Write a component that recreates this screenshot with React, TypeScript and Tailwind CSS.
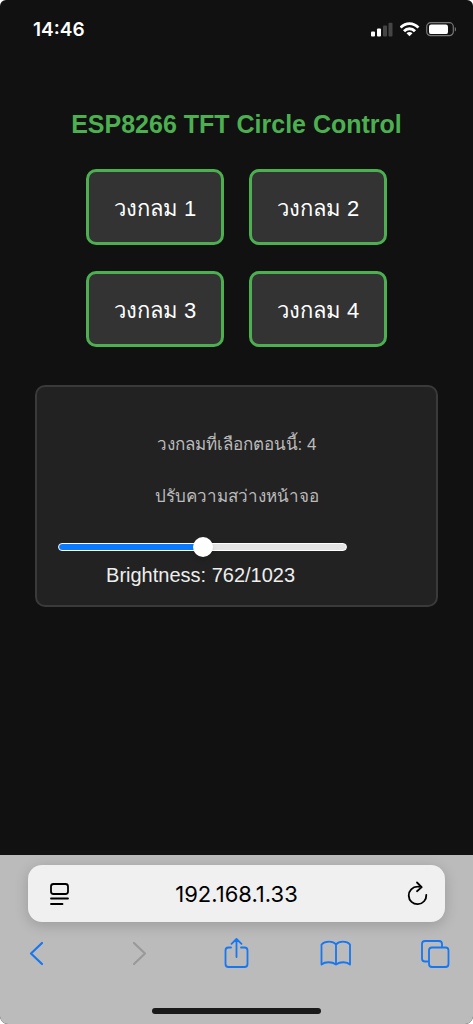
import { useState } from "react";

const MIN_BRIGHTNESS = 501;
const MAX_BRIGHTNESS = 1023;

function StatusBar() {
  return (
    <header className="flex h-14 items-center justify-between pt-1 pr-[15px] pl-[33px] text-white">
      <time className="font-['Inter',sans-serif] text-[19px] leading-6 font-semibold">14:46</time>
      <div className="flex items-center gap-1.5">
        <svg width="23" height="16" viewBox="0 0 23 16" role="img" aria-label="Signal">
          <rect x="0" y="9.500" width="4" height="5" rx="1" fill="#fff" />
          <rect x="6" y="6.500" width="4" height="8" rx="1" fill="#fff" />
          <rect x="12" y="3.500" width="4" height="11" rx="1" fill="#454545" />
          <rect x="17.500" y="0.800" width="4" height="13.700" rx="1" fill="#454545" />
        </svg>
        <svg width="20" height="16" viewBox="0 0 20 16" role="img" aria-label="Wi-Fi">
          <g fill="none" stroke="#fff" strokeWidth="2.8">
            <path d="M0.6 5.6C5.600 0.200 13.400 0.200 18.400 5.600" />
            <path d="M4 9.200C7 5.900 12 5.900 15 9.200" />
          </g>
          <path d="M6.500 11.200c1.700-1.500 4.300-1.500 6 0L9.500 14.300z" fill="#fff" />
        </svg>
        <svg width="32" height="16" viewBox="-1 0 32 16" role="img" aria-label="Battery">
          <rect x="-0.300" y="0.700" width="26.600" height="13" rx="4" fill="none" stroke="#777" strokeWidth="1.2" />
          <rect x="2" y="2.600" width="19" height="9.500" rx="2.200" fill="#fff" />
          <path d="M27.800 5c1.600.6 1.600 4 0 4.600z" fill="#777" />
        </svg>
      </div>
    </header>
  );
}

function ToolbarIcon({ label, children }: { label: string; children: React.ReactNode }) {
  return (
    <svg width="32" height="32" viewBox="0 0 32 32" fill="none" stroke="currentColor" strokeWidth="1.8" strokeLinecap="round" strokeLinejoin="round" role="img" aria-label={label}>
      {children}
    </svg>
  );
}

function BrowserBar() {
  return (
    <footer className="mt-auto bg-[#bbbbbb] pt-2.5 pb-2.5 text-[#1677f0]">
      <div className="mx-7 flex h-[57px] items-center rounded-[14px] bg-[#f0f0f0] px-4 text-black shadow-[0_3px_14px_rgba(0,0,0,0.18)]">
        <button type="button" aria-label="Page menu">
          <ToolbarIcon label="Page menu">
            <rect x="7" y="6" width="17" height="10" rx="2.5" />
            <path d="M7 20.5h17M7 26h11.5" />
          </ToolbarIcon>
        </button>
        <input
          aria-label="Address"
          defaultValue="192.168.1.33"
          className="min-w-0 flex-1 bg-transparent text-center font-['Inter',sans-serif] text-[22px] leading-7 outline-none"
        />
        <button type="button" aria-label="Reload">
          <ToolbarIcon label="Reload">
            <path d="M29.300 16.800A8.800 8.800 0 1 1 20.500 8.600Q22.500 8.500 24.600 9.200M20 4.500L24.700 9.100L20 13.200" />
          </ToolbarIcon>
        </button>
      </div>
      <nav className="mt-4 flex items-center justify-between pr-[22px] pl-5">
        <button type="button" aria-label="Back">
          <ToolbarIcon label="Back"><path d="M22 5L11 15.5L22 26" strokeWidth="2.2" /></ToolbarIcon>
        </button>
        <button type="button" aria-label="Forward" className="text-[#999999]">
          <ToolbarIcon label="Forward"><path d="M14 5L25 15.5L14 26" strokeWidth="2.2" /></ToolbarIcon>
        </button>
        <button type="button" aria-label="Share">
          <ToolbarIcon label="Share">
            <path d="M11 9.5H8.500a3 3 0 0 0-3 3V26a3 3 0 0 0 3 3h16a3 3 0 0 0 3-3V12.500a3 3 0 0 0-3-3H21M16.500 19V1M11.500 5.800L16.500 1L21.500 5.800" />
          </ToolbarIcon>
        </button>
        <button type="button" aria-label="Bookmarks">
          <ToolbarIcon label="Bookmarks">
            <path d="M17 6.500v20M17 6.500C14 2.600 6 2.600 2.500 6.500v20C6 23.500 13 23.500 17 26.500C21 23.500 28 23.500 31 26.500V6.500C28 2.600 20 2.600 17 6.500" />
          </ToolbarIcon>
        </button>
        <button type="button" aria-label="Tabs">
          <ToolbarIcon label="Tabs">
            <path d="M8.500 23.500H6a3 3 0 0 1-3-3V6a3 3 0 0 1 3-3h14a3 3 0 0 1 3 3v2.500" />
            <rect x="10" y="9.500" width="19.500" height="19.500" rx="3" />
          </ToolbarIcon>
        </button>
      </nav>
      <div className="mx-auto mt-[38px] h-1.5 w-[169px] rounded-full bg-[#1a1a1a]" />
    </footer>
  );
}

export default function App() {
  const [selected, setSelected] = useState(4);
  const [brightness, setBrightness] = useState(762);
  const filled = ((brightness - MIN_BRIGHTNESS) / (MAX_BRIGHTNESS - MIN_BRIGHTNESS)) * 100;

  return (
    <div className="flex min-h-screen flex-col overflow-hidden rounded-t-md rounded-b-lg bg-[#111111] font-['Liberation_Sans','Noto_Sans',sans-serif]">
      <StatusBar />
      <main className="px-[35px] pt-[52px] pb-8 text-center">
        <h1 className="text-[25px] leading-8 font-bold text-[#4caf50]">ESP8266 TFT Circle Control</h1>
        <div className="mx-auto mt-[29px] grid w-fit grid-cols-2 gap-x-[25px] gap-y-[26px]">
          {[1, 2, 3, 4].map((n) => (
            <button
              key={n}
              type="button"
              onClick={() => setSelected(n)}
              className="h-[76px] w-[138px] rounded-[10px] border-[3px] border-[#4caf50] bg-[#333333] pt-1 text-[22px] leading-8 text-white"
            >
              วงกลม {n}
            </button>
          ))}
        </div>
        <section className="mt-[38px] rounded-[10px] border-2 border-[#3a3a3a] bg-[#222222] px-[21px] pt-11 pb-4">
          <p className="text-[17px] leading-7 text-[#bbbbbb]">วงกลมที่เลือกตอนนี้: {selected}</p>
          <label htmlFor="brightness" className="mt-6 block text-[17px] leading-7 text-[#bbbbbb]">
            ปรับความสว่างหน้าจอ
          </label>
          <div className="mt-8 w-[81%]">
            <input
              id="brightness"
              type="range"
              min={MIN_BRIGHTNESS}
              max={MAX_BRIGHTNESS}
              value={brightness}
              onChange={(e) => setBrightness(Number(e.target.value))}
              style={{ backgroundImage: `linear-gradient(to right, #0a7aff ${filled}%, #e4e4e4 ${filled}%)` }}
              className="block h-2 w-full appearance-none rounded-full border border-white [&::-webkit-slider-thumb]:size-5 [&::-webkit-slider-thumb]:appearance-none [&::-webkit-slider-thumb]:rounded-full [&::-webkit-slider-thumb]:bg-white [&::-webkit-slider-thumb]:shadow-md"
            />
            <output htmlFor="brightness" className="mt-2.5 block pr-1 text-[20px] leading-7 text-[#eeeeee]">
              Brightness: {brightness}/1023
            </output>
          </div>
        </section>
      </main>
      <BrowserBar />
    </div>
  );
}
